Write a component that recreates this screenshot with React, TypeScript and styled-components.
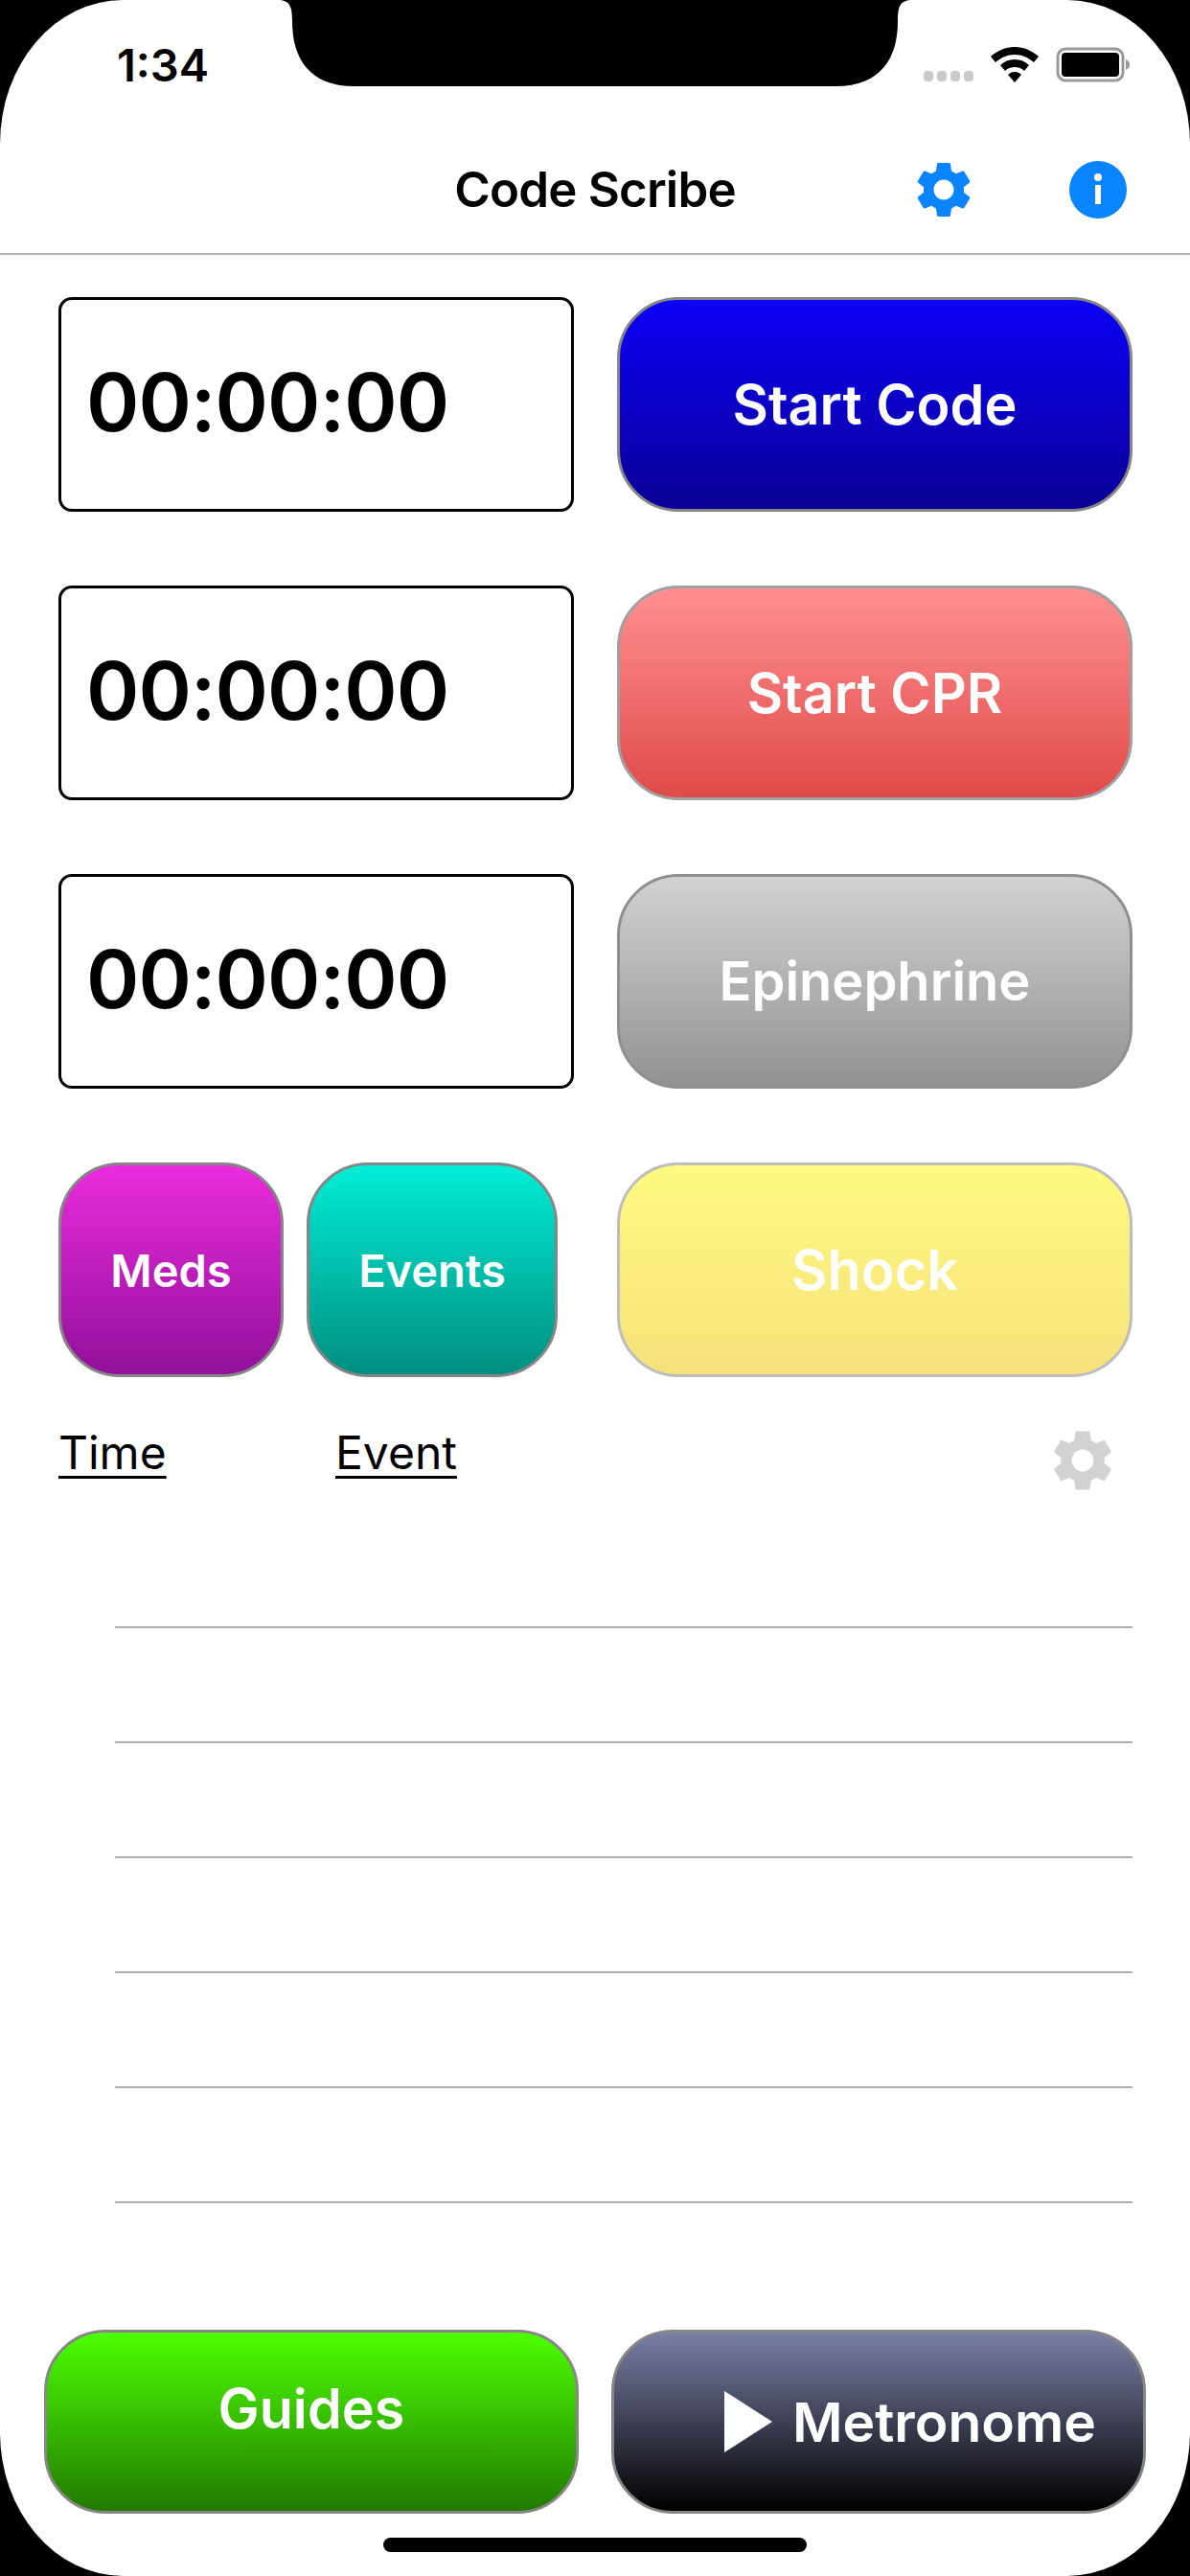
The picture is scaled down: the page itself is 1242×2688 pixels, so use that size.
import { MdSettings } from "react-icons/md";
import styled, { createGlobalStyle } from "styled-components";

const GlobalStyle = createGlobalStyle`
  html, body {
    margin: 0;
    padding: 0;
    background: #000;
  }
`;

const Screen = styled.div`
  position: relative;
  display: flex;
  flex-direction: column;
  width: 1242px;
  height: 2688px;
  overflow: hidden;
  background: #fff;
  border-radius: 128px / 150px;
  font-family: Inter, "Liberation Sans", sans-serif;
  color: #000;
`;

const Notch = styled.svg`
  position: absolute;
  top: 0;
  left: 290px;
  width: 662px;
  height: 90px;
`;

const StatusBar = styled.div`
  display: flex;
  align-items: flex-start;
  justify-content: space-between;
  box-sizing: border-box;
  height: 132px;
  padding: 49px 62px 0 122px;
`;

const Clock = styled.span`
  font-size: 47px;
  line-height: 38px;
  font-weight: 600;
`;

const StatusIcons = styled.div`
  display: flex;
  align-items: flex-end;
  height: 37px;
`;

const SignalDots = styled.div`
  display: flex;
  gap: 4px;
  margin-right: 18px;
  margin-bottom: 1px;
`;

const SignalDot = styled.i`
  display: block;
  width: 10px;
  height: 11px;
  border-radius: 4px;
  background: #c9c9c9;
`;

const Wifi = styled.svg`
  width: 50px;
  height: 37px;
  margin-right: 18px;
`;

const Battery = styled.svg`
  width: 78px;
  height: 37px;
`;

const NavBar = styled.div`
  position: relative;
  display: flex;
  align-items: center;
  justify-content: center;
  height: 132px;
  border-bottom: 2px solid #b2b2b2;
`;

const Title = styled.h1`
  margin: 0 0 2px;
  font-size: 51px;
  font-weight: 600;
  letter-spacing: -0.8px;
`;

const NavIcons = styled.div`
  position: absolute;
  top: 0;
  bottom: 0;
  left: 950px;
  display: flex;
  align-items: center;
  gap: 96px;
`;

const NavGear = styled(MdSettings)`
  display: block;
  width: 70px;
  height: 70px;
  color: #0a84ff;
`;

const InfoIcon = styled.svg`
  width: 60px;
  height: 60px;
`;

const Main = styled.main`
  display: flex;
  flex-direction: column;
  flex: 1;
  padding: 44px 60px 0 61px;
`;

const Controls = styled.div`
  display: grid;
  grid-template-columns: 538px 538px;
  grid-auto-rows: 224px;
  column-gap: 45px;
  row-gap: 77px;
`;

const Timer = styled.div`
  display: flex;
  align-items: center;
  box-sizing: border-box;
  padding: 0 0 5px 26px;
  border: 3px solid #000;
  border-radius: 14px;
  font-size: 84px;
  font-weight: 600;
  letter-spacing: -1px;
`;

const ActionButton = styled.button<{ $from: string; $to: string; $edge?: string; $size?: number }>`
  display: flex;
  align-items: center;
  justify-content: center;
  box-sizing: border-box;
  padding: 0;
  border: 3px solid ${(p) => p.$edge ?? "#868686"};
  border-radius: 64px;
  background: linear-gradient(${(p) => p.$from}, ${(p) => p.$to});
  color: #fff;
  font-family: inherit;
  font-size: ${(p) => p.$size ?? 57.5}px;
  font-weight: 600;
`;

const SmallButtons = styled.div`
  display: grid;
  grid-template-columns: 235px 262px;
  column-gap: 24px;
`;

const LogHeader = styled.div`
  display: flex;
  align-items: flex-start;
  height: 98px;
  margin-top: 44px;
`;

const LogColumn = styled.span<{ $width: number }>`
  width: ${(p) => p.$width}px;
  padding-top: 5px;
  font-size: 48px;
  line-height: 60px;
  text-decoration: underline;
  text-decoration-thickness: 3px;
  text-underline-offset: 7px;
`;

const LogGear = styled(MdSettings)`
  display: block;
  width: 76px;
  height: 76px;
  margin: 5px 14px 0 auto;
  color: #d2d2d2;
`;

const LogRow = styled.div`
  box-sizing: border-box;
  height: 120px;
  margin-left: 59px;
  border-bottom: 2px solid #adadad;
`;

const BottomBar = styled.div`
  display: grid;
  grid-template-columns: 558px 558px;
  column-gap: 34px;
  grid-auto-rows: 192px;
  padding: 0 46px;
`;

const GuidesButton = styled(ActionButton)`
  padding-bottom: 28px;
`;

const MetronomeButton = styled(ActionButton)`
  gap: 21px;
  padding-left: 66px;
`;

const PlayIcon = styled.svg`
  width: 50px;
  height: 64px;
`;

const HomeBar = styled.div`
  align-self: center;
  width: 442px;
  height: 15px;
  margin: 25px 0 25px;
  border-radius: 8px;
  background: #000;
`;

const logRows = [0, 1, 2, 3, 4, 5];

export default function App() {
  return (
    <Screen>
      <GlobalStyle />
      <Notch viewBox="0 0 662 90">
        <path d="M0 0 C12 0 15 6 15 22 C15 60 32 90 80 90 L582 90 C630 90 647 60 647 22 C647 6 650 0 662 0 Z" fill="#000" />
      </Notch>
      <StatusBar>
        <Clock>1:34</Clock>
        <StatusIcons>
          <SignalDots>
            <SignalDot />
            <SignalDot />
            <SignalDot />
            <SignalDot />
          </SignalDots>
          <Wifi viewBox="0 0 50 37">
            <path d="M25 0 C15 0 7 4 0 10 L5 16 C11 11 17 8 25 8 C33 8 39 11 45 16 L50 10 C43 4 35 0 25 0 Z" fill="#000" />
            <path d="M25 13 C19 13 14 15 10 19 L15 25 C18 22 21 21 25 21 C29 21 32 22 35 25 L40 19 C36 15 31 13 25 13 Z" fill="#000" />
            <path d="M25 26 C22 26 20 27 18 29 L25 37 L32 29 C30 27 28 26 25 26 Z" fill="#000" />
          </Wifi>
          <Battery viewBox="0 0 78 37">
            <rect x="2" y="2" width="68" height="33" rx="8" fill="none" stroke="#9a9a9a" strokeWidth="3" />
            <rect x="6" y="6" width="60" height="25" rx="4" fill="#000" />
            <path d="M73 13 C76 14 77 16 77 18.5 C77 21 76 23 73 24 Z" fill="#9a9a9a" />
          </Battery>
        </StatusIcons>
      </StatusBar>
      <NavBar>
        <Title>Code Scribe</Title>
        <NavIcons>
          <NavGear />
          <InfoIcon viewBox="0 0 60 60">
            <circle cx="30" cy="30" r="30" fill="#0a84ff" />
            <circle cx="30" cy="17" r="4" fill="#fff" />
            <rect x="27" y="25" width="6" height="20" fill="#fff" />
          </InfoIcon>
        </NavIcons>
      </NavBar>
      <Main>
        <Controls>
          <Timer>00:00:00</Timer>
          <ActionButton $from="#0c00f6" $to="#0a0096">Start Code</ActionButton>
          <Timer>00:00:00</Timer>
          <ActionButton $from="#ff9090" $to="#e04a4a" $edge="#a0a0a0">Start CPR</ActionButton>
          <Timer>00:00:00</Timer>
          <ActionButton $from="#d2d2d2" $to="#929292" $edge="#8f8f8f" $size={56}>Epinephrine</ActionButton>
          <SmallButtons>
            <ActionButton $from="#ea2cdc" $to="#91109a" $size={47}>Meds</ActionButton>
            <ActionButton $from="#00eed6" $to="#008e80" $size={47}>Events</ActionButton>
          </SmallButtons>
          <ActionButton $from="#fffa80" $to="#f5e17b" $edge="#bdbdbd">Shock</ActionButton>
        </Controls>
        <LogHeader>
          <LogColumn $width={289}>Time</LogColumn>
          <LogColumn $width={200}>Event</LogColumn>
          <LogGear />
        </LogHeader>
        {logRows.map((row) => (
          <LogRow key={row} />
        ))}
      </Main>
      <BottomBar>
        <GuidesButton $from="#4dff00" $to="#217a00">Guides</GuidesButton>
        <MetronomeButton $from="#7a80a6" $to="#000" $size={57}>
          <PlayIcon viewBox="0 0 50 64">
            <path d="M0 0 L50 32 L0 64 Z" fill="#fff" />
          </PlayIcon>
          Metronome
        </MetronomeButton>
      </BottomBar>
      <HomeBar />
    </Screen>
  );
}
